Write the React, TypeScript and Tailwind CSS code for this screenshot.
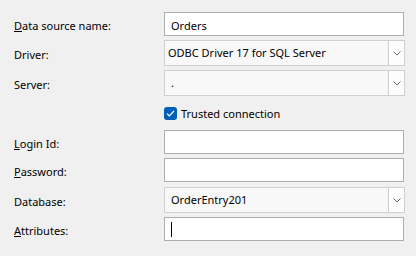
import React from "react";

const font = { fontFamily: '"Noto Sans", "Open Sans", sans-serif' };

function Label({ children }: { children: React.ReactNode }) {
  return <div className="w-[164px] shrink-0 pl-[14px] pt-[3px] text-[11px] text-black leading-none">{children}</div>;
}

function TextBox({ value, caret }: { value?: string; caret?: boolean }) {
  return (
    <div className="w-[240px] h-[24px] bg-white border border-[#adadad] flex items-center pl-[6px] text-[11px] text-black">
      {value && <span className="pt-[2px] leading-none">{value}</span>}
      {caret && <span className="block w-px h-[15px] bg-black" />}
    </div>
  );
}

function Combo({ value, pl }: { value: string; pl: string }) {
  return (
    <div className="w-[241px] h-[26px] bg-[#f8f8f8] border border-[#cfcfcf] flex items-stretch text-[11px] text-black">
      <div className={`flex-1 flex items-center pt-[1px] ${pl}`}>{value}</div>
      <div className="w-[16px] bg-[#fdfdfd] border-l border-[#cfcfcf] flex items-center justify-center">
        <svg width="8" height="5" viewBox="0 0 8 5">
          <path d="M0.5 0.5 L4 4 L7.5 0.5" fill="none" stroke="#6a6a6a" strokeWidth="1" />
        </svg>
      </div>
    </div>
  );
}

export default function App() {
  return (
    <div className="w-[416px] h-[256px] bg-[#f0f0f0] flex flex-col pt-[12px]" style={font}>
      <div className="flex items-center">
        <Label><u>D</u>ata source name:</Label>
        <TextBox value="Orders" />
      </div>
      <div className="flex items-center mt-[4px]">
        <Label>Driver:</Label>
        <Combo value="ODBC Driver 17 for SQL Server" pl="pl-[3px]" />
      </div>
      <div className="flex items-center mt-[4px]">
        <Label>Server:</Label>
        <Combo value="." pl="pl-[6px]" />
      </div>
      <div className="flex items-center h-[34px]">
        <div className="w-[164px] shrink-0" />
        <div className="w-[13px] h-[13px] rounded-[3px] bg-[#005fb8] flex items-center justify-center">
          <svg width="9" height="7" viewBox="0 0 9 7">
            <path d="M1 3.6 L3.3 5.8 L8 1" fill="none" stroke="white" strokeWidth="1.2" />
          </svg>
        </div>
        <span className="ml-[4px] text-[11px] text-black leading-none">Trusted connection</span>
      </div>
      <div className="flex items-center">
        <Label><u>L</u>ogin Id:</Label>
        <TextBox />
      </div>
      <div className="flex items-center mt-[4px]">
        <Label><u>P</u>assword:</Label>
        <TextBox />
      </div>
      <div className="flex items-center mt-[5px]">
        <Label>Database:</Label>
        <Combo value="OrderEntry201" pl="pl-[6px]" />
      </div>
      <div className="flex items-center mt-[4px]">
        <Label><u>A</u>ttributes:</Label>
        <TextBox caret />
      </div>
    </div>
  );
}
